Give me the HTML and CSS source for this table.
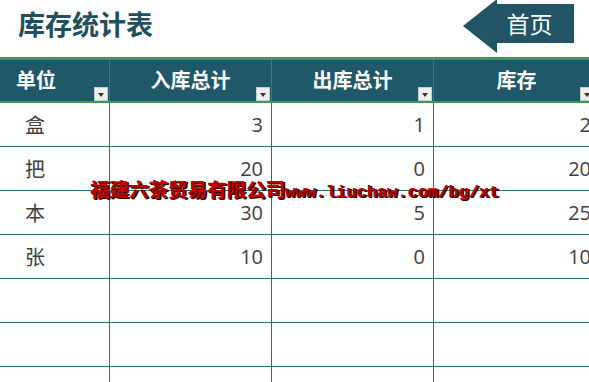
FILE: index.html
```html
<!DOCTYPE html>
<html lang="zh">
<head>
<meta charset="utf-8">
<title>库存统计表</title>
<link rel="stylesheet" href="styles.css">
</head>
<body>
<div class="page">
  <header class="top">
    <h1 class="title">库存统计表</h1>
    <a class="home"><span class="home-head"></span><span class="home-label">首页</span></a>
  </header>
  <div class="sheet">
    <div class="row head">
      <div class="cell left">单位<span class="dd"></span></div>
      <div class="cell center">入库总计<span class="dd"></span></div>
      <div class="cell center">出库总计<span class="dd"></span></div>
      <div class="cell center">库存<span class="dd"></span></div>
    </div>
    <div class="row"><div class="cell unit">盒</div><div class="cell num">3</div><div class="cell num">1</div><div class="cell num">2</div></div>
    <div class="row"><div class="cell unit">把</div><div class="cell num">20</div><div class="cell num">0</div><div class="cell num">20</div></div>
    <div class="row"><div class="cell unit">本</div><div class="cell num">30</div><div class="cell num">5</div><div class="cell num">25</div></div>
    <div class="row"><div class="cell unit">张</div><div class="cell num">10</div><div class="cell num">0</div><div class="cell num">10</div></div>
    <div class="row"><div class="cell"></div><div class="cell"></div><div class="cell"></div><div class="cell"></div></div>
    <div class="row"><div class="cell"></div><div class="cell"></div><div class="cell"></div><div class="cell"></div></div>
    <div class="row"><div class="cell"></div><div class="cell"></div><div class="cell"></div><div class="cell"></div></div>
  </div>
  <div class="watermark"><span class="wm-cn">福建六茶贸易有限公司</span><span class="wm-url">www.liuchaw.com/bg/xt</span></div>
</div>
</body>
</html>
```
FILE: styles.css
```css
html, body {
  margin: 0;
  padding: 0;
  background: #ffffff;
  overflow: hidden;
}
.page {
  position: relative;
  width: 589px;
  height: 382px;
  overflow: hidden;
  font-family: "Noto Sans CJK SC", "Noto Sans", sans-serif;
}
.top {
  height: 57px;
  display: flex;
  justify-content: space-between;
  align-items: flex-start;
}
.title {
  margin: 6px 0 0 18px;
  font-size: 27px;
  line-height: 36px;
  font-weight: 700;
  color: #224f5e;
}
.home {
  display: flex;
  align-items: center;
  margin: 4px 15px 0 0;
  height: 39px;
}
.home-head {
  width: 0;
  height: 0;
  margin-top: 5px;
  border-right: 34px solid #215565;
  border-top: 27px solid transparent;
  border-bottom: 27px solid transparent;
}
.home-label {
  width: 77px;
  height: 39px;
  box-sizing: border-box;
  padding-right: 12px;
  background: #215565;
  color: #ffffff;
  font-size: 23px;
  line-height: 39px;
  text-align: center;
}
.sheet {
  width: 600px;
  border-top: 3px solid #3d9a4b;
}
.row {
  display: grid;
  grid-template-columns: 110px 162px 162px 166px;
  height: 43px;
  border-bottom: 1px solid #2f6f72;
}
.row.head {
  height: 41px;
  background: #1f5868;
  border-bottom: 2px solid #3d9a4b;
}
.cell {
  position: relative;
  border-right: 1px solid #2f6f72;
  display: flex;
  align-items: center;
  font-size: 20px;
  color: #404040;
}
.row.head .cell {
  border-right-color: #3a7b86;
  color: #ffffff;
  font-weight: 700;
  font-size: 20px;
  padding-bottom: 2px;
  box-sizing: border-box;
}
.cell.left { padding-left: 16px; }
.cell.center { justify-content: center; }
.cell.unit { padding-left: 25px; }
.cell.num {
  justify-content: flex-end;
  padding-right: 8px;
  font-family: "Open Sans", "Noto Sans", sans-serif;
}
.dd {
  position: absolute;
  right: 1px;
  bottom: 0;
  width: 14px;
  height: 14px;
  box-sizing: border-box;
  background: #eef0f0;
  border: 1px solid #c9cccc;
}
.dd::after {
  content: "";
  position: absolute;
  left: 3px;
  top: 5px;
  border-top: 4px solid #333;
  border-left: 3.5px solid transparent;
  border-right: 3.5px solid transparent;
}
.row .cell:last-child .dd { right: 5px; }
.watermark {
  position: absolute;
  left: 90px;
  top: 178px;
  display: flex;
  align-items: baseline;
  color: #c00000;
  font-weight: 700;
  text-shadow: 1px 1px 0 #2a0808, 2px 1px 0 #2a0808;
  white-space: nowrap;
}
.wm-cn {
  font-family: "Noto Sans CJK SC", sans-serif;
  font-size: 19.5px;
  line-height: 22px;
}
.wm-url {
  font-family: "Liberation Mono", monospace;
  font-size: 17px;
  line-height: 22px;
}
```
